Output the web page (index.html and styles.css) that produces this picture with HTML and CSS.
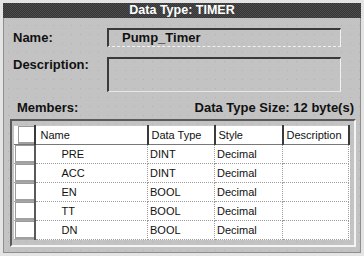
FILE: index.html
```html
<!DOCTYPE html>
<html>
<head>
<meta charset="utf-8">
<link rel="stylesheet" href="styles.css">
</head>
<body>
<div class="window">
  <div class="titlebar">Data Type: TIMER</div>
  <div class="form">
    <div class="label label-name">Name:</div>
    <div class="field field-name">Pump_Timer</div>
    <div class="label label-desc">Description:</div>
    <div class="field field-desc"></div>
  </div>
  <div class="members">
    <span>Members:</span>
    <span>Data Type Size: 12 byte(s)</span>
  </div>
  <div class="frame">
    <table class="grid">
      <colgroup>
        <col class="c-rh"><col class="c-name"><col class="c-type"><col class="c-style"><col class="c-desc">
      </colgroup>
      <tr class="head">
        <td class="rh"><div class="rhbox"></div></td>
        <td class="name-h">Name</td>
        <td>Data Type</td>
        <td>Style</td>
        <td>Description</td>
      </tr>
      <tr><td class="rh"><div class="rhbox"></div></td><td class="name">PRE</td><td>DINT</td><td>Decimal</td><td></td></tr>
      <tr><td class="rh"><div class="rhbox"></div></td><td class="name">ACC</td><td>DINT</td><td>Decimal</td><td></td></tr>
      <tr><td class="rh"><div class="rhbox"></div></td><td class="name">EN</td><td>BOOL</td><td>Decimal</td><td></td></tr>
      <tr><td class="rh"><div class="rhbox"></div></td><td class="name">TT</td><td>BOOL</td><td>Decimal</td><td></td></tr>
      <tr><td class="rh"><div class="rhbox"></div></td><td class="name">DN</td><td>BOOL</td><td>Decimal</td><td></td></tr>
    </table>
  </div>
</div>
</body>
</html>
```
FILE: styles.css
```css
html, body {
  margin: 0;
  padding: 0;
}
body {
  background: #e4e4e4;
  font-family: "Liberation Sans", Arial, sans-serif;
  color: #111;
}
.window {
  box-sizing: border-box;
  margin: 3px 0 0 3px;
  width: 358px;
  height: 250px;
  background-color: #c3c3c3;
  background-image: radial-gradient(circle, #b2b2b2 0.7px, transparent 1px);
  background-size: 9px 9px;
  border-left: 1px solid #8e8e8e;
  border-right: 1px solid #8e8e8e;
  border-bottom: 1px solid #8e8e8e;
}
.titlebar {
  height: 15px;
  margin: 0 -1px;
  background-color: #404040;
  background-image: repeating-conic-gradient(#353535 0 25%, #4c4c4c 0 50%);
  background-size: 2px 2px;
  color: #fff;
  font-weight: bold;
  font-size: 12.5px;
  line-height: 15px;
  text-align: center;
}
.form {
  display: grid;
  grid-template-columns: 94px 234px;
  row-gap: 10px;
  padding: 10px 0 0 9px;
}
.label {
  font-weight: bold;
  font-size: 13px;
  line-height: 16px;
}
.label-name {
  align-self: center;
}
.label-desc {
  align-self: start;
}
.field {
  box-sizing: border-box;
  border-top: 2px solid #3a3a3a;
  border-left: 2px solid #3a3a3a;
  border-right: 1px solid #f2f2f2;
  border-bottom: 1px dashed #f2f2f2;
}
.field-name {
  height: 19px;
  padding-left: 13px;
  font-weight: bold;
  font-size: 13px;
  line-height: 16px;
}
.field-desc {
  height: 35px;
  border-bottom-style: solid;
  border-bottom-color: #e6e6e6;
}
.members {
  display: flex;
  justify-content: space-between;
  margin-top: 9px;
  padding: 0 6px 0 13px;
  height: 14px;
  font-weight: bold;
  font-size: 13px;
  line-height: 14px;
}
.frame {
  box-sizing: border-box;
  margin: 4px 4px 0 6px;
  height: 128px;
  padding: 4px 3px 0 2px;
  border-top: 2px solid #5a5a5a;
  border-left: 2px solid #5a5a5a;
  border-right: 2px solid #f4f4f4;
  border-bottom: 2px solid #f4f4f4;
}
.grid {
  border-collapse: collapse;
  table-layout: fixed;
  width: 335px;
  background: #fff;
  border-left: 1px solid #fff;
  font-size: 11px;
}
.c-rh { width: 20px; }
.c-name { width: 113px; }
.c-type { width: 67px; }
.c-style { width: 68px; }
.c-desc { width: 66px; }
.grid td {
  height: 19px;
  padding: 0 0 0 2px;
  box-sizing: border-box;
  border-right: 1px dotted #9c9c9c;
  border-bottom: 1px dotted #9c9c9c;
  line-height: 16px;
  white-space: nowrap;
  overflow: hidden;
}
.grid tr.head td {
  border-right: 2px solid #3a3a3a;
  border-bottom: 1px solid #777;
  border-top: 1px solid #c8c8c8;
  padding-left: 3px;
}
.grid tr.head td.name-h {
  padding-left: 5px;
}
.grid td.rh {
  padding: 0;
  background: #fff;
  border-right: 2px solid #5a5a5a;
  border-bottom: 1px solid #a8a8a8;
}
.grid tr.head td.rh {
  border-right: 2px solid #3a3a3a;
}
.rhbox {
  box-sizing: border-box;
  height: 18px;
  border: 1px solid #9a9a9a;
  border-right: none;
  border-bottom: 2px solid #a0a0a0;
  background: #fff;
}
.grid td.name {
  padding-left: 26px;
}
```
